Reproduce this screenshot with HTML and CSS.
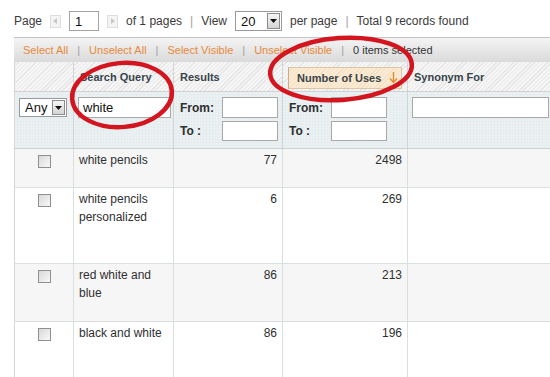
FILE: index.html
```html
<!DOCTYPE html>
<html lang="en">
<head>
    <meta charset="UTF-8">
    <meta name="viewport" content="width=device-width, initial-scale=1.0">
    <title>Search Terms</title>
    <link rel="stylesheet" href="styles.css">
</head>
<body>
    <div class="page">
        <div class="pager">
            <span>Page</span>
            <span class="pager-arrow">
                <svg width="7" height="8" viewBox="0 0 7 8"><path d="M5 1 L1 4 L5 7 Z" fill="#c9c9c9"/></svg>
            </span>
            <input class="pager-input" type="text" value="1">
            <span class="pager-arrow">
                <svg width="7" height="8" viewBox="0 0 7 8"><path d="M2 1 L6 4 L2 7 Z" fill="#c9c9c9"/></svg>
            </span>
            <span>of 1 pages</span>
            <span class="sep">|</span>
            <span>View</span>
            <span class="select select-limit">
                <select><option>20</option></select>
                <span class="select-btn">
                    <svg width="7" height="4" viewBox="0 0 7 4"><path d="M0 0 H7 L3.5 4 Z" fill="#111"/></svg>
                </span>
            </span>
            <span>per page</span>
            <span class="sep">|</span>
            <span>Total 9 records found</span>
        </div>

        <div class="massaction">
            <a href="#">Select All</a>
            <span class="sep">|</span>
            <a href="#">Unselect All</a>
            <span class="sep">|</span>
            <a href="#">Select Visible</a>
            <span class="sep">|</span>
            <a href="#">Unselect Visible</a>
            <span class="sep">|</span>
            <span class="count">0 items selected</span>
        </div>

        <div class="grid">
            <table>
                <colgroup>
                    <col class="col-check">
                    <col class="col-query">
                    <col class="col-results">
                    <col class="col-uses">
                    <col class="col-synonym">
                </colgroup>
                <thead>
                    <tr class="headings">
                        <th></th>
                        <th>Search Query</th>
                        <th>Results</th>
                        <th class="sorted">
                            <span class="sort-desc">
                                Number of Uses
                                <svg width="9" height="12" viewBox="0 0 9 12"><path d="M4.5 0 V10 M1 6.5 L4.5 10.5 L8 6.5" fill="none" stroke="#e8892c" stroke-width="1.4"/></svg>
                            </span>
                        </th>
                        <th>Synonym For</th>
                    </tr>
                    <tr class="filter">
                        <th>
                            <span class="select select-any">
                                <select><option>Any</option></select>
                                <span class="select-btn">
                                    <svg width="7" height="4" viewBox="0 0 7 4"><path d="M0 0 H7 L3.5 4 Z" fill="#111"/></svg>
                                </span>
                            </span>
                        </th>
                        <th><input class="input-query" type="text" value="white"></th>
                        <th>
                            <div class="range">
                                <div class="range-line"><span class="range-label">From:</span><input type="text"></div>
                                <div class="range-line"><span class="range-label">To :</span><input type="text"></div>
                            </div>
                        </th>
                        <th>
                            <div class="range">
                                <div class="range-line"><span class="range-label">From:</span><input type="text"></div>
                                <div class="range-line"><span class="range-label">To :</span><input type="text"></div>
                            </div>
                        </th>
                        <th><input class="input-synonym" type="text"></th>
                    </tr>
                </thead>
                <tbody>
                    <tr class="row-short even">
                        <td class="check"><input type="checkbox"></td>
                        <td>white pencils</td>
                        <td class="num">77</td>
                        <td class="num">2498</td>
                        <td></td>
                    </tr>
                    <tr class="row-tall">
                        <td class="check"><input type="checkbox"></td>
                        <td>white pencils personalized</td>
                        <td class="num">6</td>
                        <td class="num">269</td>
                        <td></td>
                    </tr>
                    <tr class="row-mid even">
                        <td class="check"><input type="checkbox"></td>
                        <td>red white and blue</td>
                        <td class="num">86</td>
                        <td class="num">213</td>
                        <td></td>
                    </tr>
                    <tr class="row-mid">
                        <td class="check"><input type="checkbox"></td>
                        <td>black and white</td>
                        <td class="num">86</td>
                        <td class="num">196</td>
                        <td></td>
                    </tr>
                </tbody>
            </table>
        </div>

        <!-- hand-drawn marks over the screenshot -->
        <svg class="marks" width="550" height="377" viewBox="0 0 550 377">
            <ellipse cx="122" cy="95" rx="50" ry="32" transform="rotate(-5 122 95)"/>
            <ellipse cx="341" cy="69" rx="71" ry="31" transform="rotate(-4 341 69)"/>
        </svg>
    </div>
</body>
</html>
```

FILE: styles.css
```css
body {
    margin: 0;
    font-family: "Liberation Sans", Arial, sans-serif;
    color: #2f2f2f;
    background: #fff;
    overflow: hidden;
}
.page {
    position: relative;
    width: 550px;
    height: 377px;
    overflow: hidden;
    padding-left: 14px;
    box-sizing: border-box;
}

/* pager */
.pager {
    display: flex;
    align-items: center;
    gap: 8px;
    padding-top: 11px;
    height: 20px;
    font-size: 12px;
    color: #3a3a3a;
}
.sep {
    color: #a0a0a0;
}
.pager-arrow {
    display: flex;
    align-items: center;
    justify-content: center;
    width: 9px;
    height: 11px;
    border: 1px solid #dedede;
    background: #f4f4f4;
}
.pager-input {
    width: 30px;
    height: 20px;
    box-sizing: border-box;
    border: 1px solid #a3a3a3;
    padding: 0 5px;
    font: 13px "Liberation Sans", Arial, sans-serif;
    color: #111;
}

/* fake select with a classic dropdown button */
.select {
    position: relative;
    display: inline-block;
}
.select select {
    appearance: none;
    -webkit-appearance: none;
    box-sizing: border-box;
    border: 1px solid #9a9a9a;
    border-radius: 0;
    background: #fff;
    font: 13px "Liberation Sans", Arial, sans-serif;
    color: #111;
    padding: 0 0 0 5px;
    margin: 0;
}
.select-btn {
    position: absolute;
    top: 2px;
    right: 2px;
    bottom: 2px;
    width: 13px;
    display: flex;
    align-items: center;
    justify-content: center;
    border: 1px solid #8c8c8c;
    box-sizing: border-box;
    background: linear-gradient(#f6f6f6, #d4d4d4);
}
.select-limit select {
    width: 47px;
    height: 20px;
}
.select-any select {
    width: 48px;
    height: 19px;
}

/* mass action bar */
.massaction {
    display: flex;
    align-items: center;
    gap: 9px;
    margin-top: 6px;
    height: 24px;
    padding-left: 9px;
    border-top: 1px solid #c4c4c4;
    background: linear-gradient(#f4f4f4, #dadada);
    font-size: 11px;
}
.massaction a {
    color: #e8893a;
    text-decoration: none;
}
.massaction .count {
    color: #333;
}

/* grid */
.grid {
    width: 536px;
    overflow: hidden;
}
table {
    border-collapse: collapse;
    table-layout: fixed;
    width: 593px;
    border-left: 1px solid #d6d6d6;
}
.col-check { width: 59px; }
.col-query { width: 100px; }
.col-results { width: 109px; }
.col-uses { width: 125px; }
.col-synonym { width: 200px; }

.headings th {
    height: 25px;
    padding: 0 6px;
    text-align: left;
    font-size: 11px;
    font-weight: bold;
    color: #38444a;
    white-space: nowrap;
    background: repeating-linear-gradient(135deg, #f7f7f7 0 2px, #e3e3e3 2px 3px);
    border-right: 1px solid #d4d4d4;
    border-bottom: 1px solid #cdd3d5;
}
.headings th.sorted {
    padding: 3px 5px 1px;
}
.sort-desc {
    display: flex;
    align-items: center;
    gap: 8px;
    height: 20px;
    padding-left: 8px;
    border: 1px solid #dcc6a6;
    border-left-color: #c9ad87;
    background: repeating-linear-gradient(135deg, #fcebd4 0 2px, #f6e0c2 2px 3px);
}

.filter {
    height: 57px;
}
.filter th {
    vertical-align: top;
    padding: 5px 4px 0;
    text-align: left;
    background-color: #e2eaec;
    background-image:
        linear-gradient(90deg, rgba(255, 255, 255, 0.35) 1px, transparent 1px),
        linear-gradient(rgba(255, 255, 255, 0.35) 1px, transparent 1px);
    background-size: 3px 3px;
    border-right: 1px solid #cdd5d7;
    border-bottom: 1px solid #c8d0d2;
}
.filter input {
    box-sizing: border-box;
    height: 21px;
    border: 1px solid #a9a9a9;
    background: #fff;
    font: 13px "Liberation Sans", Arial, sans-serif;
    color: #111;
    padding: 0 4px;
    margin: 0;
}
.select-any {
    margin-top: 1px;
}
.input-query {
    width: 93px;
}
.input-synonym {
    width: 137px;
}
.range {
    display: flex;
    flex-direction: column;
    gap: 3px;
    padding-left: 2px;
}
.range-line {
    display: flex;
    align-items: center;
}
.range-label {
    width: 42px;
    font-size: 12px;
    font-weight: bold;
    color: #2f2f2f;
}
.range-line input {
    width: 56px;
}
.range-line + .range-line input {
    height: 20px;
}

tbody td {
    vertical-align: top;
    padding: 2px 5px;
    font-size: 12px;
    line-height: 18px;
    color: #2f2f2f;
    border-right: 1px solid #dadfe0;
    border-bottom: 1px solid #dadfe0;
}
tbody tr.even td {
    background: #f6f6f6;
}
.row-short { height: 39px; }
.row-tall { height: 76px; }
.row-mid { height: 58px; }

td.num {
    text-align: right;
}
td.check {
    padding-top: 6px;
    text-align: center;
}
td.check input {
    appearance: none;
    -webkit-appearance: none;
    display: block;
    margin: 0 auto;
    width: 13px;
    height: 13px;
    box-sizing: border-box;
    border: 1px solid #8f8f8f;
    background: linear-gradient(135deg, #d8d8d8, #f9f9f9);
}

.marks {
    position: absolute;
    top: 0;
    left: 0;
    pointer-events: none;
}
.marks ellipse {
    fill: none;
    stroke: #d3151f;
    stroke-width: 4.5;
}
```
